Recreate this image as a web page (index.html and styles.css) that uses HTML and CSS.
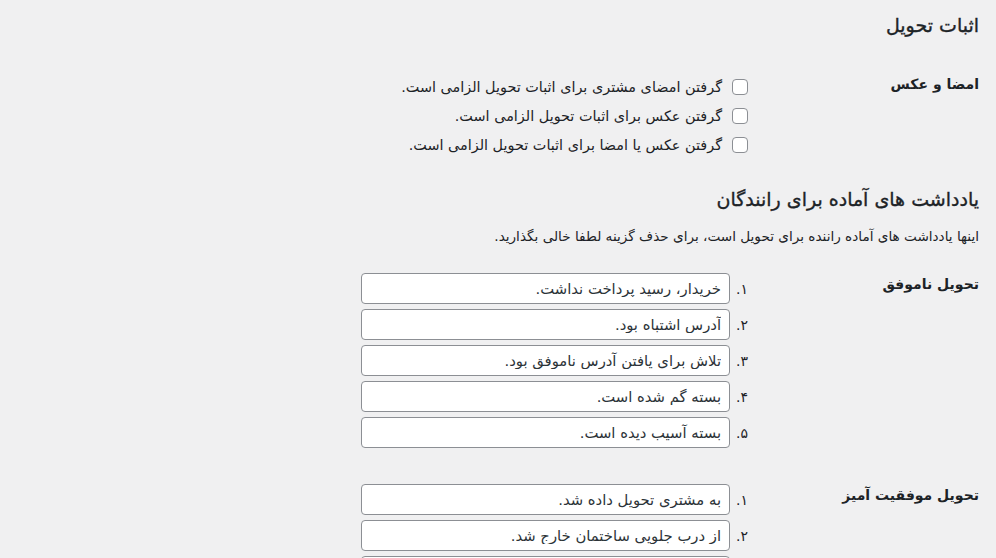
FILE: index.html
```html
<!DOCTYPE html>
<html lang="fa" dir="rtl">
<head>
<meta charset="utf-8">
<title>اثبات تحویل</title>
<link rel="stylesheet" href="styles.css">
</head>
<body>
<div class="wrap">
  <h2 class="title first">اثبات تحویل</h2>
  <div class="row row-proof">
    <div class="th">امضا و عکس</div>
    <div class="td">
      <label class="check"><input type="checkbox"><span>گرفتن امضای مشتری برای اثبات تحویل الزامی است.</span></label>
      <label class="check"><input type="checkbox"><span>گرفتن عکس برای اثبات تحویل الزامی است.</span></label>
      <label class="check"><input type="checkbox"><span>گرفتن عکس یا امضا برای اثبات تحویل الزامی است.</span></label>
    </div>
  </div>

  <h2 class="title second">یادداشت های آماده برای رانندگان</h2>
  <p class="description">اینها یادداشت های آماده راننده برای تحویل است، برای حذف گزینه لطفا خالی بگذارید.</p>

  <div class="row row-notes">
    <div class="th">تحویل ناموفق</div>
    <div class="td notes">
      <div class="note"><span class="num">۱.</span><input type="text" class="regular-text" value="خریدار، رسید پرداخت نداشت."></div>
      <div class="note"><span class="num">۲.</span><input type="text" class="regular-text" value="آدرس اشتباه بود."></div>
      <div class="note"><span class="num">۳.</span><input type="text" class="regular-text" value="تلاش برای یافتن آدرس ناموفق بود."></div>
      <div class="note"><span class="num">۴.</span><input type="text" class="regular-text" value="بسته گم شده است."></div>
      <div class="note"><span class="num">۵.</span><input type="text" class="regular-text" value="بسته آسیب دیده است."></div>
    </div>
  </div>

  <div class="row row-notes second-notes">
    <div class="th">تحویل موفقیت آمیز</div>
    <div class="td notes">
      <div class="note"><span class="num">۱.</span><input type="text" class="regular-text" value="به مشتری تحویل داده شد."></div>
      <div class="note"><span class="num">۲.</span><input type="text" class="regular-text" value="از درب جلویی ساختمان خارج شد."></div>
      <div class="note"><span class="num">۳.</span><input type="text" class="regular-text" value="به نگهبان ساختمان تحویل داده شد."></div>
    </div>
  </div>
</div>
</body>
</html>
```

FILE: styles.css
```css
html, body {
  margin: 0;
  padding: 0;
  background: #f0f0f1;
  height: 100%;
  overflow: hidden;
}
body {
  font-family: "DejaVu Sans", "Noto Sans", sans-serif;
  font-size: 14.4px;
  color: #1d2327;
}
.wrap {
  direction: rtl;
  padding: 0 17px 0 20px;
}
.title {
  font-size: 19px;
  font-weight: 400;
  line-height: 24px;
  margin: 0;
  color: #1d2327;
  -webkit-text-stroke: 0.35px #1d2327;
}
.title.first {
  padding-top: 13px;
}
.title.second {
  margin-top: 28px;
}
.row {
  display: grid;
  grid-template-columns: 231px 1fr;
}
.row-proof {
  margin-top: 35px;
}
.th {
  font-weight: 700;
  font-size: 14px;
  line-height: 20px;
  padding-top: 2px;
}
.td {
  display: flex;
  flex-direction: column;
  align-items: flex-start;
}
.check {
  display: flex;
  align-items: center;
  height: 29px;
  line-height: 20px;
}
.check input {
  appearance: none;
  -webkit-appearance: none;
  width: 16px;
  height: 16px;
  margin: 0 0 0 10px;
  border: 1px solid #8c8f94;
  border-radius: 4px;
  background: #fff;
  box-sizing: border-box;
}
.description {
  margin: 15px 0 0;
  font-size: 13.6px;
  line-height: 20px;
  color: #1d2327;
}
.row-notes {
  margin-top: 27px;
}
.row-notes .th {
  padding-top: 1px;
}
.second-notes {
  margin-top: 36px;
}
.notes {
  gap: 5px;
}
.note {
  display: flex;
  align-items: center;
  gap: 6px;
  height: 31px;
}
.num {
  font-size: 14px;
  line-height: 20px;
}
.regular-text {
  width: 369px;
  height: 31px;
  box-sizing: border-box;
  border: 1px solid #8c8f94;
  border-radius: 4px;
  background: #fff;
  padding: 0 8px;
  margin: 0;
  font-family: "DejaVu Sans", "Noto Sans", sans-serif;
  font-size: 14.8px;
  color: #2c3338;
  direction: rtl;
}
```
